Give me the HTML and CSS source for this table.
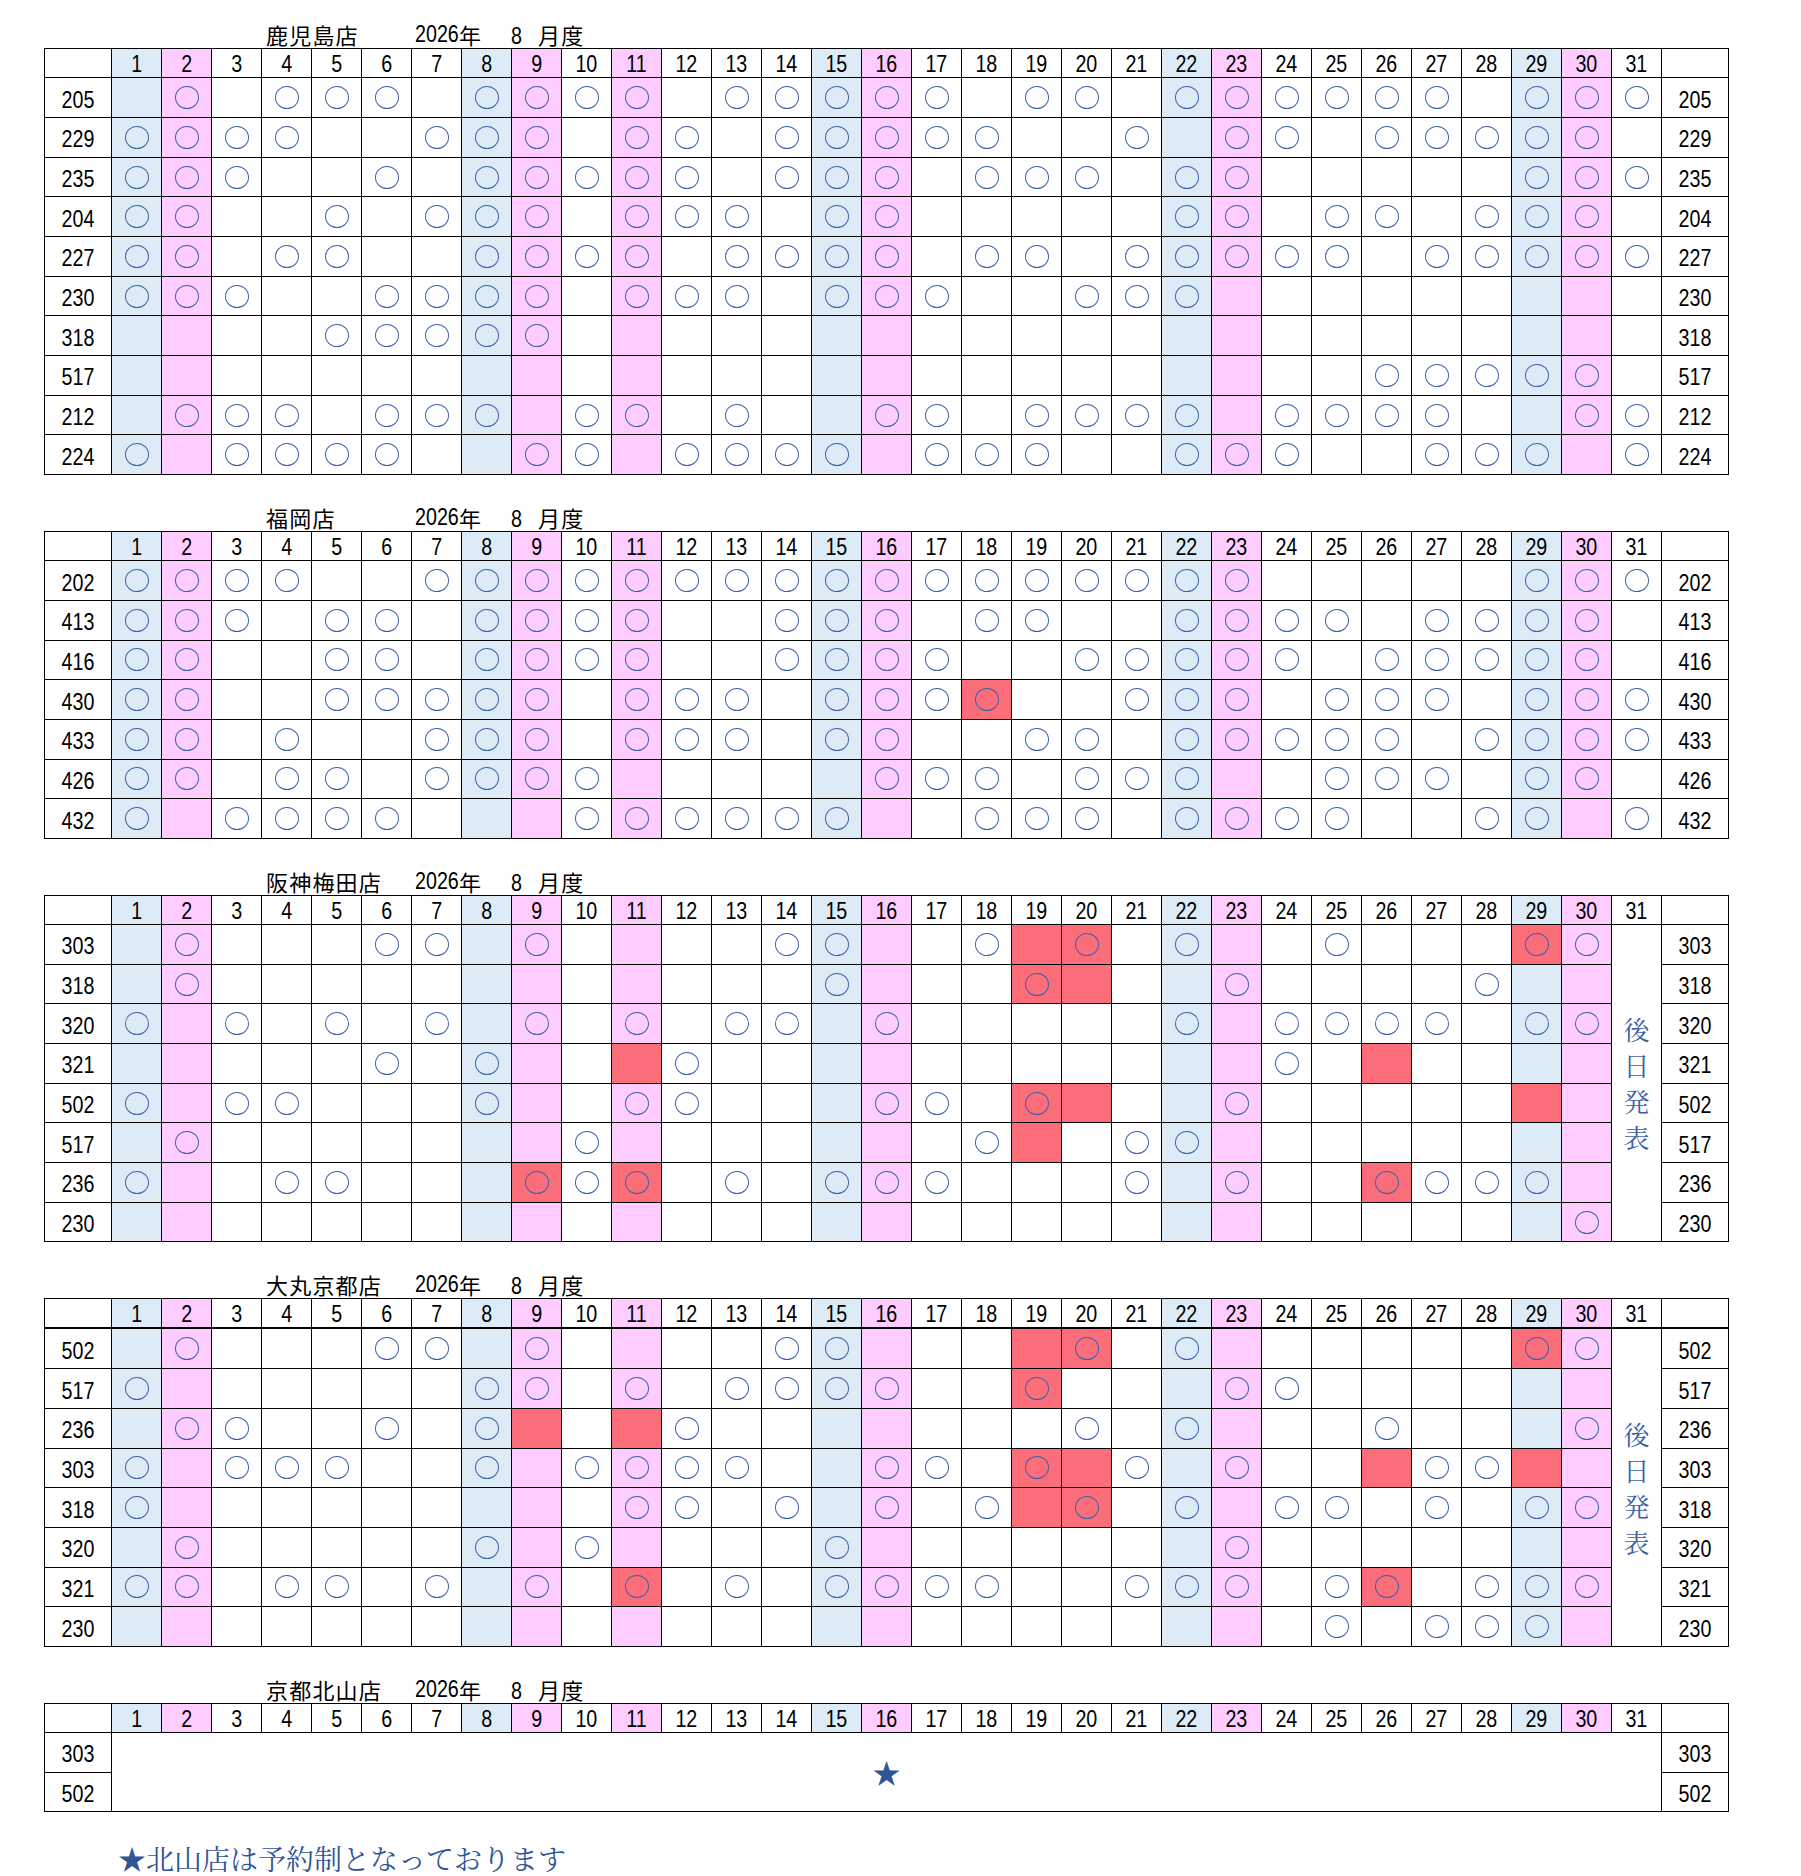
FILE: index.html
```html
<!DOCTYPE html>
<html lang="ja">
<head>
<meta charset="utf-8">
<title>2026年 8月度 出勤表</title>
<link rel="stylesheet" href="styles.css">
</head>
<body>
<div class="sheet" id="sheet"></div>
<p class="note">★北山店は予約制となっております</p>
<script src="app.js"></script>
</body>
</html>
```

FILE: styles.css
```css
html, body {
  margin: 0;
  padding: 0;
  background: #ffffff;
}
body {
  font-family: "Liberation Sans", "Noto Sans CJK JP", sans-serif;
  color: #000;
}
.sheet {
  display: flex;
  flex-direction: column;
  gap: 30px;
  padding: 22.3px 0 0 44px;
}
.title {
  display: flex;
  height: 24px;
  line-height: 24px;
  padding-bottom: 2px;
  font-size: 22px;
  letter-spacing: 1.2px;
  padding-left: 222px;
  white-space: nowrap;
  font-family: "Noto Sans CJK JP", sans-serif;
}
.t-name { width: 149px; }
.t-year { width: 96px; display: flex; }
.t-mon { width: 27px; }
.num {
  display: inline-block;
  font-family: "Liberation Sans", sans-serif;
  font-size: 24px;
  letter-spacing: 0;
  transform: scaleX(0.82);
  transform-origin: left center;
}
.t-year .num { width: 44px; }
.grid {
  border-collapse: collapse;
  table-layout: fixed;
  width: 1685px;
}
.lc { width: 67px; }
.dc { width: 50px; }
.grid th,
.grid td {
  border: 1px solid #000;
  padding: 0;
  text-align: center;
  vertical-align: middle;
  font-size: 24px;
  font-weight: normal;
  line-height: 24px;
}
.n {
  display: inline-block;
  transform: scaleX(0.82);
}
.grid th {
  height: 26px;
  padding-top: 2px;
}
.grid.thick thead th {
  border-bottom: 2px solid #000;
}
.grid td {
  height: 38.7px;
}
.grid td.lbl {
  height: 34.7px;
  padding-top: 4px;
}
.sat { background: #ddebf7; }
.sun { background: #ffccff; }
.red { background: #fa6d79; }
.c {
  display: block;
  width: 24px;
  height: 23px;
  margin: 0 auto;
  box-sizing: border-box;
  border: 1.5px solid #3c62ab;
  border-radius: 50%;
}
.later {
  background: #fff;
  color: #3c5fa5;
  font-family: "Noto Serif CJK JP", "Noto Sans CJK JP", serif;
}
.later span {
  display: block;
  font-size: 26px;
  line-height: 36px;
}
.star {
  background: #fff;
  color: #2f5597;
  font-family: "Noto Sans CJK JP", sans-serif;
}
.star span {
  font-size: 28px;
  line-height: 28px;
}
.note {
  margin: 32px 0 0 0;
  padding-left: 118px;
  font-size: 28px;
  line-height: 28px;
  color: #2f5597;
  white-space: nowrap;
  font-family: "Noto Serif CJK JP", "Noto Sans CJK JP", serif;
}
```

FILE: app.js
```js
(function () {
  var BLUE = [1, 8, 15, 22, 29];
  var PINK = [2, 9, 11, 16, 23, 30];

  var STORES = [
    { name: '鹿児島店', rows: [
      ['205', '2 4 5 6 8 9 10 11 13 14 15 16 17 19 20 22 23 24 25 26 27 29 30 31'],
      ['229', '1 2 3 4 7 8 9 11 12 14 15 16 17 18 21 23 24 26 27 28 29 30'],
      ['235', '1 2 3 6 8 9 10 11 12 14 15 16 18 19 20 22 23 29 30 31'],
      ['204', '1 2 5 7 8 9 11 12 13 15 16 22 23 25 26 28 29 30'],
      ['227', '1 2 4 5 8 9 10 11 13 14 15 16 18 19 21 22 23 24 25 27 28 29 30 31'],
      ['230', '1 2 3 6 7 8 9 11 12 13 15 16 17 20 21 22'],
      ['318', '5 6 7 8 9'],
      ['517', '26 27 28 29 30'],
      ['212', '2 3 4 6 7 8 10 11 13 16 17 19 20 21 22 24 25 26 27 30 31'],
      ['224', '1 3 4 5 6 9 10 12 13 14 15 17 18 19 22 23 24 27 28 29 31']
    ]},
    { name: '福岡店', rows: [
      ['202', '1 2 3 4 7 8 9 10 11 12 13 14 15 16 17 18 19 20 21 22 23 29 30 31'],
      ['413', '1 2 3 5 6 8 9 10 11 14 15 16 18 19 22 23 24 25 27 28 29 30'],
      ['416', '1 2 5 6 8 9 10 11 14 15 16 17 20 21 22 23 24 26 27 28 29 30'],
      ['430', '1 2 5 6 7 8 9 11 12 13 15 16 17 18x 21 22 23 25 26 27 29 30 31'],
      ['433', '1 2 4 7 8 9 11 12 13 15 16 19 20 22 23 24 25 26 28 29 30 31'],
      ['426', '1 2 4 5 7 8 9 10 16 17 18 20 21 22 25 26 27 29 30'],
      ['432', '1 3 4 5 6 10 11 12 13 14 15 18 19 20 22 23 24 25 28 29 31']
    ]},
    { name: '阪神梅田店', later: true, rows: [
      ['303', '2 6 7 9 14 15 18 19r 20x 22 25 29x 30'],
      ['318', '2 15 19x 20r 23 28'],
      ['320', '1 3 5 7 9 11 13 14 16 22 24 25 26 27 29 30'],
      ['321', '6 8 11r 12 24 26r'],
      ['502', '1 3 4 8 11 12 16 17 19x 20r 23 29r'],
      ['517', '2 10 18 19r 21 22'],
      ['236', '1 4 5 9x 10 11x 13 15 16 17 21 23 26x 27 28 29'],
      ['230', '30']
    ]},
    { name: '大丸京都店', later: true, thick: true, rows: [
      ['502', '2 6 7 9 14 15 19r 20x 22 29x 30'],
      ['517', '1 8 9 11 13 14 15 16 19x 23 24'],
      ['236', '2 3 6 8 9r 11r 12 20 22 26 30'],
      ['303', '1 3 4 5 8 10 11 12 13 16 17 19x 20r 21 23 26r 27 28 29r'],
      ['318', '1 11 12 14 16 18 19r 20x 22 24 25 27 29 30'],
      ['320', '2 8 10 15 23'],
      ['321', '1 2 4 5 7 9 11x 13 15 16 17 18 21 22 23 25 26x 28 29 30'],
      ['230', '25 27 28 29']
    ]},
    { name: '京都北山店', star: true, rows: [
      ['303', ''],
      ['502', '']
    ]}
  ];

  function colClass(d) {
    if (BLUE.indexOf(d) >= 0) return 'sat';
    if (PINK.indexOf(d) >= 0) return 'sun';
    return '';
  }

  function el(tag, cls, text) {
    var e = document.createElement(tag);
    if (cls) e.className = cls;
    if (text != null) e.textContent = text;
    return e;
  }

  function numCell(tag, cls, text) {
    var c = el(tag, cls);
    if (text) c.appendChild(el('span', 'n', text));
    return c;
  }

  function parse(spec) {
    var map = {};
    spec.split(/\s+/).forEach(function (tok) {
      if (!tok) return;
      var m = tok.match(/^(\d+)([rx]?)$/);
      if (!m) return;
      var d = parseInt(m[1], 10);
      map[d] = { red: m[2] === 'r' || m[2] === 'x', circle: m[2] !== 'r' };
    });
    return map;
  }

  var sheet = document.getElementById('sheet');

  STORES.forEach(function (store) {
    var sec = el('section', 'section');

    var title = el('div', 'title');
    title.appendChild(el('span', 't-name', store.name));
    var year = el('span', 't-year');
    year.appendChild(el('span', 'num', '2026'));
    year.appendChild(el('span', 't-nen', '年'));
    title.appendChild(year);
    var mon = el('span', 't-mon');
    mon.appendChild(el('span', 'num', '8'));
    title.appendChild(mon);
    title.appendChild(el('span', 't-deg', '月度'));
    sec.appendChild(title);

    var table = el('table', 'grid' + (store.thick ? ' thick' : ''));
    var cg = el('colgroup');
    cg.appendChild(el('col', 'lc'));
    for (var i = 1; i <= 31; i++) cg.appendChild(el('col', 'dc'));
    cg.appendChild(el('col', 'lc'));
    table.appendChild(cg);

    var thead = el('thead');
    var htr = el('tr');
    htr.appendChild(el('th', 'corner'));
    for (var d = 1; d <= 31; d++) {
      htr.appendChild(numCell('th', colClass(d), String(d)));
    }
    htr.appendChild(el('th', 'corner'));
    thead.appendChild(htr);
    table.appendChild(thead);

    var tbody = el('tbody');
    store.rows.forEach(function (row, ri) {
      var tr = el('tr');
      tr.appendChild(numCell('td', 'lbl', row[0]));
      if (store.star) {
        if (ri === 0) {
          var sc = el('td', 'star');
          sc.colSpan = 31;
          sc.rowSpan = store.rows.length;
          sc.appendChild(el('span', '', '★'));
          tr.appendChild(sc);
        }
      } else {
        var map = parse(row[1]);
        for (var d = 1; d <= 31; d++) {
          if (store.later && d === 31) {
            if (ri === 0) {
              var lt = el('td', 'later');
              lt.rowSpan = store.rows.length;
              ['後', '日', '発', '表'].forEach(function (ch) {
                lt.appendChild(el('span', '', ch));
              });
              tr.appendChild(lt);
            }
            continue;
          }
          var info = map[d];
          var td = el('td', info && info.red ? 'red' : colClass(d));
          if (info && info.circle) td.appendChild(el('span', 'c'));
          tr.appendChild(td);
        }
      }
      tr.appendChild(numCell('td', 'lbl', row[0]));
      tbody.appendChild(tr);
    });
    table.appendChild(tbody);
    sec.appendChild(table);
    sheet.appendChild(sec);
  });
})();
```
